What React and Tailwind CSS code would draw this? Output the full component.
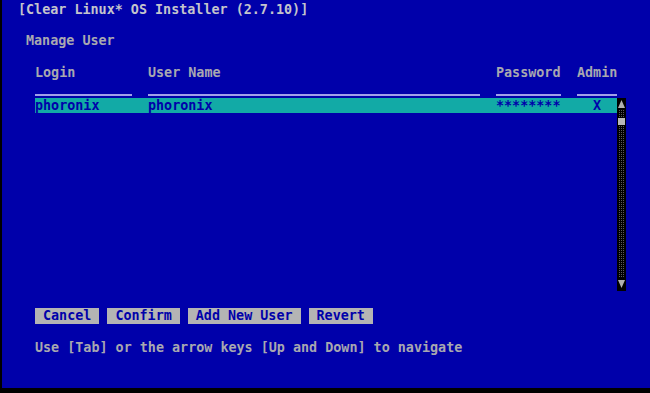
export default function App() {
  const font = { fontFamily: '"DejaVu Sans Mono", "Liberation Mono", monospace' };
  return (
    <div className="w-[650px] h-[393px] bg-black flex flex-col overflow-hidden">
      <div
        className="h-[388px] ml-[2px] bg-[#0000aa] flex flex-col text-[13.4px] font-bold text-[#a8a8b0]"
        style={font}
      >
        <div className="mt-[2px] ml-[16px] h-4 leading-4 text-[#c4c4cc] whitespace-pre">
          [Clear Linux* OS Installer (2.7.10)]
        </div>
        <div className="mt-[15px] ml-[24px] h-4 leading-4 whitespace-pre">Manage User</div>

        <div className="mt-[16px] ml-[33px] flex gap-4 h-4 leading-4 whitespace-pre">
          <div className="w-[97px]">Login</div>
          <div className="w-[332px]">User Name</div>
          <div className="w-[65px]">Password</div>
          <div className="w-[40px]">Admin</div>
        </div>

        <div className="mt-[13px] ml-[33px] flex gap-4 h-[2px]">
          <div className="w-[97px] bg-[#a0a0e8]" />
          <div className="w-[332px] bg-[#a0a0e8]" />
          <div className="w-[65px] bg-[#a0a0e8]" />
          <div className="w-[40px] bg-[#a0a0e8]" />
        </div>

        <div className="mt-[2px] ml-[33px] flex h-[193px]">
          <div className="w-[582px] flex flex-col">
            <div className="h-[15px] bg-[#12aaa6] text-[#0000aa] flex gap-4 leading-[15px] whitespace-pre">
              <div className="w-[97px]">phoronix</div>
              <div className="w-[332px]">phoronix</div>
              <div className="w-[65px]">********</div>
              <div className="w-[40px] text-center">X</div>
            </div>
          </div>
          <svg width="9" height="193" viewBox="0 0 9 193" className="block">
            <defs>
              <pattern id="shade" width="2" height="2" patternUnits="userSpaceOnUse">
                <rect width="2" height="2" fill="#000" />
                <rect x="0" y="0" width="1" height="1" fill="#5a5a5a" />
              </pattern>
            </defs>
            <rect width="9" height="193" fill="#000" />
            <rect x="2" y="12" width="5" height="167" fill="url(#shade)" />
            <polygon points="4.5,2 8,10 1,10" fill="#b0b0b0" />
            <rect x="1" y="20" width="7" height="7" fill="#b8b8b8" />
            <polygon points="1,182 8,182 4.5,190" fill="#b0b0b0" />
          </svg>
        </div>

        <div className="mt-[17px] ml-[33px] flex gap-[8px] h-4 leading-4 text-[#0000aa] whitespace-pre">
          <div className="bg-[#b4b4b4] px-2">Cancel</div>
          <div className="bg-[#b4b4b4] px-2">Confirm</div>
          <div className="bg-[#b4b4b4] px-2">Add New User</div>
          <div className="bg-[#b4b4b4] px-2">Revert</div>
        </div>

        <div className="mt-4 ml-[33px] h-4 leading-4 whitespace-pre">
          Use [Tab] or the arrow keys [Up and Down] to navigate
        </div>
      </div>
    </div>
  );
}
